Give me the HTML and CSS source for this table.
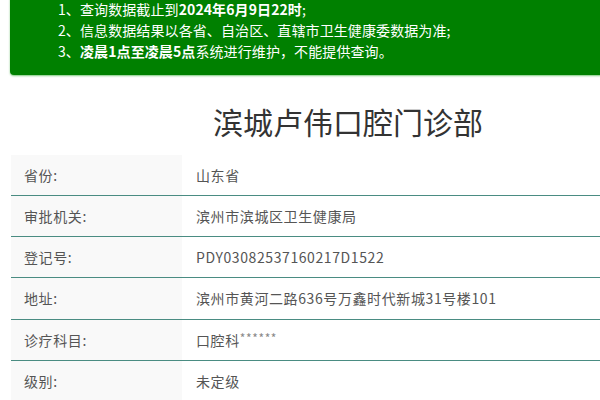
FILE: index.html
```html
<!DOCTYPE html>
<html lang="zh-CN">
<head>
<meta charset="utf-8">
<link rel="stylesheet" href="styles.css">
</head>
<body>
<div class="page">
  <div class="notice">
    <p>1、查询数据截止到<b>2024年6月9日22时</b>;</p>
    <p>2、信息数据结果以各省、自治区、直辖市卫生健康委数据为准;</p>
    <p>3、<b>凌晨1点至凌晨5点</b>系统进行维护，不能提供查询。</p>
  </div>
  <h1 class="title">滨城卢伟口腔门诊部</h1>
  <div class="table">
    <div class="row"><div class="label">省份:</div><div class="value">山东省</div></div>
    <div class="row"><div class="label">审批机关:</div><div class="value">滨州市滨城区卫生健康局</div></div>
    <div class="row"><div class="label">登记号:</div><div class="value">PDY03082537160217D1522</div></div>
    <div class="row"><div class="label">地址:</div><div class="value">滨州市黄河二路636号万鑫时代新城31号楼101</div></div>
    <div class="row"><div class="label">诊疗科目:</div><div class="value">口腔科<span class="stars">******</span></div></div>
    <div class="row"><div class="label">级别:</div><div class="value">未定级</div></div>
  </div>
</div>
</body>
</html>
```

FILE: styles.css
```css
html, body {
  margin: 0;
  padding: 0;
  overflow: hidden;
  background: #fff;
}
body {
  font-family: "Noto Sans CJK SC", "Noto Sans", sans-serif;
  color: #555;
}
.page {
  width: 676px;
  margin-left: 10px;
  margin-top: -13px;
}
.notice {
  background: #008000;
  color: #fff;
  border-radius: 0 0 4px 4px;
  padding: 12px 0 12.5px 48px;
  box-shadow: 0 1px 2px #7fc97f;
  font-size: 14px;
  line-height: 21px;
  letter-spacing: 0.1px;
}
.notice p {
  margin: 0;
}
.notice b {
  font-weight: 700;
}
.title {
  margin: 26px 0 14px;
  text-align: center;
  font-size: 30px;
  line-height: 40px;
  font-weight: 400;
  color: #333;
}
.table {
  margin-left: 1px;
}
.row {
  display: flex;
  height: 40.25px;
  border-bottom: 1px solid #4a8c82;
  font-size: 14px;
  letter-spacing: 0.6px;
}
.label {
  width: 171px;
  flex: none;
  background: #f9f9f9;
  padding-left: 13px;
  box-sizing: border-box;
  display: flex;
  align-items: center;
}
.value {
  flex: 1;
  padding-left: 14px;
  display: flex;
  align-items: center;
}
.stars {
  color: #888;
  font-size: 12px;
  letter-spacing: 0.6px;
  margin-top: -4px;
}
```
